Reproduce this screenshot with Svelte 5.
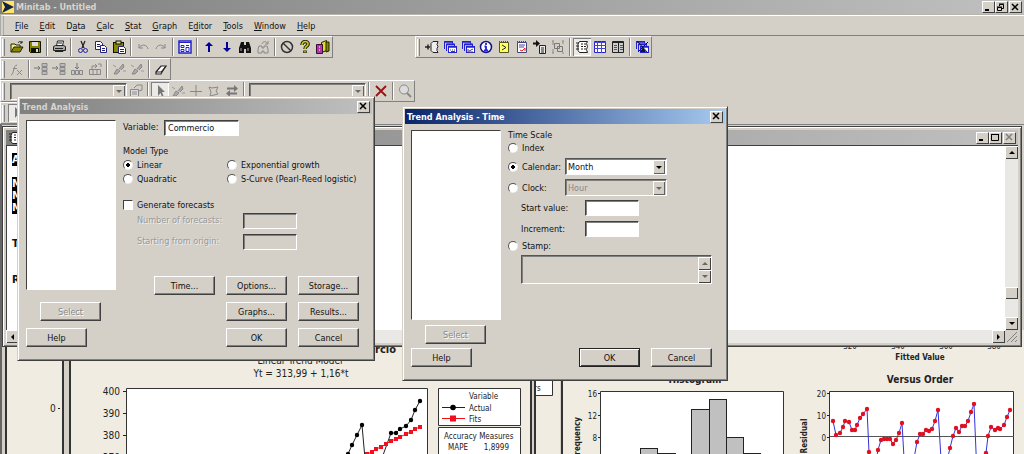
<script>
  const menus = [
    ["", "F", "ile"],
    ["", "E", "dit"],
    ["D", "a", "ta"],
    ["", "C", "alc"],
    ["", "S", "tat"],
    ["", "G", "raph"],
    ["E", "d", "itor"],
    ["", "T", "ools"],
    ["", "W", "indow"],
    ["", "H", "elp"]
  ];

  // 14x14 glyphs
  const windows = (mark) =>
    `<path d="M1.500 9V1.500h8v2M3.500 11V4h8v2" fill="none" stroke="#22c"/><path d="M1 2h9M3 4.500h9" stroke="#22c" stroke-width="1.500"/><rect x="5.500" y="6.500" width="8" height="6" fill="#fff" stroke="#22c"/><path d="M5 7h9" stroke="#22c" stroke-width="1.500"/>${mark}`;
  const sheet =
    '<path d="M4.500 1.500h8l-1 2 1 3-1 3 1 3h-8l-1.500-2V4z" fill="#fff" stroke="#222"/>';

  const icons = {
    open: '<path d="M1 12V4h4l1 1h4v2" fill="#ee8" stroke="#220"/><path d="M1 12l3-5h9l-3 5z" fill="#880" stroke="#220"/><path d="M8 3c1-2 3-2 4 0m0-2v2h-2" fill="none" stroke="#220"/>',
    save: '<path d="M1.500 1.500h11v11h-10l-1-1z" fill="#880" stroke="#110"/><path d="M4 2h6v4H4z" fill="#ddd"/><path d="M3 8h8v5H3z" fill="#110"/><path d="M8 9h2v3H8z" fill="#ddd"/>',
    print: '<path d="M4.500 6l1-5h6l-1 5" fill="#fff" stroke="#222"/><path d="M1.500 6.500l2-1h8l2 1v4h-12z" fill="#aaa" stroke="#222"/><path d="M3 11.500h8l2-2M3 8.500h8M6 3h4" fill="none" stroke="#222"/>',
    cut: '<path d="M5 1l3 7M9 1L6 8" stroke="#222" stroke-width="1.300"/><circle cx="4.500" cy="10.500" r="2" fill="none" stroke="#22a"/><circle cx="9.500" cy="10.500" r="2" fill="none" stroke="#22a"/>',
    copy: '<path d="M1.500 1.500h5l2 2v6h-7z" fill="#fff" stroke="#227"/><path d="M3 4.500h3M3 6.500h3" stroke="#227"/><path d="M6.500 5.500h4l2 2v5h-6z" fill="#fff" stroke="#227"/><path d="M8 8.500h3M8 10.500h3" stroke="#227"/>',
    paste: '<rect x="1.500" y="2.500" width="10" height="10" fill="#880" stroke="#110"/><rect x="4" y="1" width="5" height="3" fill="#dd8" stroke="#110"/><path d="M6.500 6.500h5l2 2v5h-7z" fill="#fff" stroke="#227"/><path d="M8 9.500h4M8 11.500h4" stroke="#227"/>',
    undo: '<path d="M3 4v4h4M3 8c2-4 8-4 9 1" fill="none" stroke="#888"/>',
    redo: '<path d="M11 4v4H7M11 8c-2-4-8-4-9 1" fill="none" stroke="#888"/>',
    dialog: '<rect x="1" y="1" width="12" height="12" fill="#fff" stroke="#22c" stroke-width="1.500"/><path d="M1 2.500h12" stroke="#22c"/><path d="M3 5.500h3v2H3zM3 9.500h3v2H3zM8 5.500h3M8 7.500h3v4H8z" fill="none" stroke="#22c"/>',
    up: '<path d="M7 2l4 4H8v6H6V6H3z" fill="#009"/>',
    down: '<path d="M7 12l4-4H8V2H6v6H3z" fill="#009"/>',
    find: '<path d="M3 2h3v3h2V2h3l2 6v5H8V9H6v4H1V8z" fill="#111"/><path d="M3 8v3M10 8v3" stroke="#aaa"/>',
    findNext: '<path d="M3 6h3v2h2V6h3l1 3v4H8v-2H6v2H2V9z" fill="none" stroke="#888"/><path d="M6 4c1-3 4-3 5-1m1-2v3H9" fill="none" stroke="#888"/>',
    stop: '<circle cx="7" cy="7" r="5.500" fill="none" stroke="#333" stroke-width="1.500"/><path d="M3 3l8 8" stroke="#333" stroke-width="1.500"/>',
    help: '<path d="M4 5c0-5 7-4 6-.5C9.500 6.500 7 6 7 9M7 10.500V13" fill="none" stroke="#220" stroke-width="3.500"/><path d="M4 5c0-5 7-4 6-.5C9.500 6.500 7 6 7 9M7 11V12.500" fill="none" stroke="#cc2" stroke-width="1.500"/>',
    books: '<path d="M5.500 2.500l5-2v10l-5 2z" fill="#dd2" stroke="#220"/><path d="M10 2h3v9l-3 1z" fill="#880" stroke="#220"/><path d="M.5 4.500h6v9h-6z" fill="#b3a" stroke="#313"/><path d="M3 7h1M3 10h1" stroke="#fff"/>',
    fx: '<path d="M1 13c3 0 2-10 6-10M3 6.500h4M7 8l5 5M12 8l-5 5" fill="none" stroke="#888"/>',
    rows: '<path d="M0 6h6M4 4l2 2-2 2" fill="none" stroke="#777"/><path d="M8 1.500h5v3H8zM8 5.500h5v3H8zM8 9.500h5v3H8z" fill="#bbb" stroke="#888"/>',
    insert: '<path d="M1.500 8.500h3v4h-3zM5.500 8.500h3v4h-3zM9.500 8.500h3v4h-3z" fill="#ccc" stroke="#888"/><path d="M7 1v6M5 5l2 2 2-2" fill="none" stroke="#777"/>',
    move: '<path d="M1.500 7.500h11v5h-11zM5 7v6M9 7v6M4 7V4h5m-2-2l2 2-2 2M10 2h3v3" fill="none" stroke="#888"/>',
    brush: '<path d="M2 12l3-5 3 2-3 3zM7 7l4-5 1 3-3 3" fill="#aaa" stroke="#888"/><path d="M1 3l3 2M11 9h3" stroke="#999"/>',
    eraser: '<path d="M2 10l5-6h5l-4 6-1 2H2z" fill="#fff" stroke="#222" stroke-width="1.200"/><path d="M2 10h5l5-6" fill="none" stroke="#222"/>',
    props: '<path d="M1.500 5.500h8v7h-8z" fill="#ddd" stroke="#888"/><path d="M3 8h5M3 10h5M5 4l3-3h5v5l-3 1" fill="none" stroke="#888"/>',
    arrow: '<path d="M5 1v11l2.500-3L9 13l1.500-1L9 8h3z" fill="#777"/>',
    plus: '<path d="M7 1v12M1 7.500h12" stroke="#888"/>',
    poly: '<path d="M2 3l3 1 6-1-2 4 2 3-8 2 1-4z" fill="none" stroke="#888"/>',
    swap: '<path d="M2 4.500h8M12 9.500H4" stroke="#777" stroke-width="2"/><path d="M9 1l4 3.500L9 8zM5 6L1 9.500 5 13z" fill="#777"/>',
    cross: '<path d="M2 2l10 10M12 2L2 12" stroke="#911" stroke-width="1.800"/>',
    zoom: '<circle cx="6" cy="5.500" r="4.500" fill="#ddd" stroke="#888"/><path d="M9 9l4 4" stroke="#888" stroke-width="2"/>',
    toSheet: `<path d="M13 1.500H8l-2 2v7l2 2h5l-1-2v-2l1-2-1-2z" fill="#eee" stroke="#222"/><path d="M0 7h5M3 4.500v5" stroke="#222" stroke-width="1.500"/>`,
    sessions: windows('<path d="M7 10h1M9 10h1M11 10h1M8 11.500h4" stroke="#447"/>'),
    graphs: windows('<path d="M7 9v3h5M8 11l2-1 2-1" fill="none" stroke="#447"/>'),
    info: '<circle cx="7" cy="7" r="5.500" fill="#fff" stroke="#118" stroke-width="1.500"/><path d="M7 3v2M7 6v5M5.500 6.500H7M5 10.500h4" stroke="#22d" stroke-width="1.800"/>',
    history: '<path d="M2.500 2.500h9v10h-9z" fill="#ff6" stroke="#552"/><path d="M2 1.500h10" stroke="#552" stroke-dasharray="1 1"/><path d="M5 5l4 2.500L5 10" fill="none" stroke="#222"/>',
    report: '<path d="M2.500 2.500h9v10h-9z" fill="#fff" stroke="#447"/><path d="M2 1.500h10" stroke="#447" stroke-dasharray="1 1"/><path d="M4 5h6M4 7h5" stroke="#44a"/><path d="M5 10l2 1 3-3v3" fill="none" stroke="#d22"/>',
    append: '<path d="M0 3.500h4" stroke="#111" stroke-width="2"/><path d="M3 0l4 3.500L3 7z" fill="#111"/><path d="M6.500 5.500h6v8h-6z" fill="#eee" stroke="#222"/><path d="M8 8h3M8 10h3M8 12h3" stroke="#222"/>',
    group: '<path d="M3.500 3.500h5v5h-5zM6.500 6.500h5v5h-5z" fill="none" stroke="#777"/><path d="M1 1h2M11 1h2M1 13h2M11 13h2M2 1v4M12 1v3M2 9v4" stroke="#888"/>',
    session: sheet + '<path d="M6 4h2M9 4h2M6 6.500h2M9 6.500h2M6 9h2M9 9h2M1 3h3M1 6h3M1 9h3" stroke="#222"/>',
    grid: '<path d="M1.500 1.500h11v11h-11z" fill="#fff" stroke="#22c"/><path d="M1 2.500h12M1 5.500h12M1 8.500h12M4.500 1v12M8.500 1v12" stroke="#44d"/>',
    columns: '<path d="M1.500 1.500h11v11h-11z" fill="#ccc" stroke="#222"/><path d="M2 2.500h10M7.500 1v12" stroke="#222"/><path d="M3 5.500h3M3 7.500h3M3 9.500h3M9 5.500h3M9 7.500h3M9 9.500h3" stroke="#555"/>',
    closeAll: windows("") + '<path d="M2 1l11 12M13 2L3 12" stroke="#113"/><path d="M5 12l3-5 3 5z" fill="#113"/>'
  };

  const standardBar = ["open", "save", "|", "print", "|", "cut", "copy", "paste", "|", "undo", "redo", "|", "dialog", "|", "up", "down", "find", "findNext", "|", "stop", "help", "books"];
  const projectBar = ["toSheet", "sessions", "graphs", "info", "history", "report", "append", "group", "|", "session", "grid", "columns", "|", "closeAll"];
  const worksheetBar = ["fx", "|", "rows", "rows", "insert", "move", "|", "brush", "brush", "|", "eraser"];
  const graphBar = ["arrow", "brush", "plus", "poly", "swap"];

  const actual = [[343, 460], [348, 454], [352, 445], [357, 435], [362, 425], [366, 470], [382, 458], [391, 433], [396, 433], [400, 429], [406, 426], [411, 420], [415, 410], [420, 401]];
  const fits = [[367, 454], [372, 452], [376, 449], [381, 447], [386, 444], [391, 441], [396, 439], [400, 437], [406, 434], [411, 432], [415, 429], [420, 427]];
  const bars = [[640, 448, 17], [657, 453, 18], [691, 409, 18], [709, 399, 17], [726, 437, 17], [743, 453, 17]];
  const residuals = [
    [833, 421], [836, 435], [840, 433], [843, 427], [845, 421], [849, 422], [852, 430], [855, 430], [857, 425], [860, 418], [863, 414], [867, 409],
    [869, 452], [873, 475], [878, 450], [881, 440], [884, 439], [887, 439], [890, 439], [893, 444], [896, 440], [899, 433], [902, 423],
    [905, 475], [911, 475], [917, 442], [920, 434], [923, 434], [926, 430], [929, 431], [932, 429], [935, 421], [938, 410],
    [942, 475], [946, 465], [950, 448], [953, 436], [956, 428], [959, 432], [962, 426], [965, 426], [968, 421], [971, 412], [974, 404],
    [977, 475], [982, 475], [986, 453], [988, 436], [991, 427], [995, 430], [998, 428], [1000, 429], [1004, 425], [1007, 417], [1010, 410]
  ];

  let model = $state("linear");
  let scale = $state("calendar");
  let variable = $state("Commercio");
</script>

{#snippet icon(name)}
  <svg class="icon" viewBox="0 0 14 14">{@html icons[name]}</svg>
{/snippet}

{#snippet tools(names)}
  {#each names as name}
    {#if name === "|"}
      <span class="sep"></span>
    {:else}
      <button class="tool" class:pressed={name === "arrow" || name === "session"} aria-label={name}>{@render icon(name)}</button>
    {/if}
  {/each}
{/snippet}

{#snippet caption(kind, disabled = false)}
  <button class="caption" {disabled} aria-label={kind}>
    <svg viewBox="0 0 10 9">
      {#if kind === "close"}
        <path d="M2 1l6 6M8 1L2 7" stroke-width="1.5" />
      {:else if kind === "minimize"}
        <path d="M2 7h4" stroke-width="2" />
      {:else if kind === "maximize"}
        <path d="M1.500 1v6.500h7V1M1 1.500h8" />
      {:else}
        <path d="M3.500 3V1.500h4v4H6M3 1h5M1.500 4.500h4v3h-4zM1 4h5" />
      {/if}
    </svg>
  </button>
{/snippet}

{#snippet arrow(dir, disabled = false)}
  <button class="arrow {dir}" {disabled} aria-label={dir}><i></i></button>
{/snippet}

<main>
  <header class="title main-title">
    <svg class="logo" viewBox="0 0 12 12">
      <path d="M0 0h12v12H0z" fill="#ffe566" />
      <path d="M0 0l12 6-12 6 3-6z" fill="#124" />
    </svg>
    <span>Minitab - Untitled</span>
    {@render caption("minimize")}{@render caption("restore")}{@render caption("close")}
  </header>

  <nav class="menu">
    {#each menus as [before, key, after]}
      <button>{before}<u>{key}</u>{after}</button>
    {/each}
  </nav>

  <div class="bars">
    <div class="row">
      <div class="toolbar">{@render tools(standardBar)}</div>
      <div class="toolbar project">{@render tools(projectBar)}</div>
    </div>
    <div class="row">
      <div class="toolbar">{@render tools(worksheetBar)}</div>
    </div>
    <div class="row">
      <div class="toolbar">
        <div class="combo wide off">
          <select disabled aria-label="Item"><option></option></select>
          <span class="drop"></span>
        </div>
        {@render tools(["props", "|", ...graphBar, "|"])}
        <div class="combo wide off">
          <select disabled aria-label="Group"><option></option></select>
          <span class="drop"></span>
        </div>
        {@render tools(["|", "cross", "|", "zoom"])}
      </div>
    </div>
    <div class="row">
      <div class="toolbar">{@render tools(graphBar)}</div>
    </div>
  </div>

  <section class="workspace">
    <div class="graph summary">
      <svg viewBox="7 330 55 200">
        <text x="50" y="412">0</text>
        <path class="axis" d="M58 408.500h2" />
      </svg>
    </div>

    <div class="graph legend">
      <svg viewBox="536 330 24 200">
        <path class="plot" d="M530.500 370.500h22v25h-22z" />
        <text class="small" x="534" y="391">rs</text>
      </svg>
    </div>

    <div class="graph trend">
      <svg viewBox="71 330 459 200">
        <text class="head" x="300" y="353" text-anchor="middle">Trend Analysis Plot for Commercio</text>
        <text class="sub" x="300" y="364" text-anchor="middle">Linear Trend Model</text>
        <text class="sub" x="301" y="377" text-anchor="middle">Yt = 313,99 + 1,16*t</text>
        <path class="plot" d="M126.500 388.500h301v141h-301z" />
        {#each [400, 390, 380, 370] as tick, i}
          <text x="120" y={395 + i * 22} text-anchor="end">{tick}</text>
          <path class="axis" d="M123 {391.5 + i * 22}h3" />
        {/each}
        <polyline points={actual.join(" ")} fill="none" stroke="#222" />
        {#each actual as [x, y]}
          <circle cx={x} cy={y} r="2.2" />
        {/each}
        <polyline points={fits.join(" ")} fill="none" stroke="#e11" />
        {#each fits as [x, y]}
          <rect x={x - 2} y={y - 2} width="4" height="4" fill="#f01020" />
        {/each}
        <path class="plot" d="M438.500 388.500h82v37h-82zM438.500 427.500h82v90h-82z" />
        <text class="small" x="469" y="399">Variable</text>
        <path class="axis" d="M442 407.500h23" />
        <circle cx="453" cy="407.500" r="2.800" />
        <text class="small" x="469" y="411">Actual</text>
        <path d="M442 418.500h23" stroke="#e11" />
        <path d="M450 415.500h6v6h-6z" fill="#f01020" />
        <text class="small" x="469" y="422">Fits</text>
        <text class="small" x="444" y="439">Accuracy Measures</text>
        <text class="small" x="448" y="450">MAPE</text>
        <text class="small" x="509" y="450" text-anchor="end">1,8999</text>
      </svg>
    </div>

    <div class="graph residual">
      <svg viewBox="563 330 461 200">
        <text class="label" x="695" y="383" text-anchor="middle">Histogram</text>
        <path class="plot" d="M600.500 391.500h183v130h-183z" />
        {#each [16, 12, 8] as tick, i}
          <text class="small" x="597" y={397 + i * 22} text-anchor="end">{tick}</text>
          <path class="axis" d="M598 {393.5 + i * 22}h2" />
        {/each}
        {#each bars as [x, y, w]}
          <rect x={x + 0.5} y={y + 0.5} width={w} height="90" fill="#c0c0c0" stroke="#222" />
        {/each}
        <text class="small bold" transform="translate(580 438) rotate(-90)" text-anchor="middle">Frequency</text>

        {#each [320, 340, 360, 380] as tick, i}
          <text class="small" x={850 + i * 48} y="349" text-anchor="middle">{tick}</text>
        {/each}
        <text class="small bold" x="920" y="360" text-anchor="middle">Fitted Value</text>
        <text class="label" x="920" y="383" text-anchor="middle">Versus Order</text>
        <path class="plot" d="M829.500 391.500h184v130h-184z" />
        {#each [20, 10, 0] as tick, i}
          <text class="small" x="826" y={397 + i * 22} text-anchor="end">{tick}</text>
          <path class="axis" d="M827 {393.5 + i * 22}h3" />
        {/each}
        <path d="M830 436.500h184" stroke="#555" />
        <polyline points={residuals.join(" ")} fill="none" stroke="#33d" />
        {#each residuals as [x, y]}
          <circle cx={x} cy={y} r="2.200" fill="#e01020" />
        {/each}
        <text class="small bold" transform="translate(807 436) rotate(-90)" text-anchor="middle">Residual</text>
      </svg>
    </div>

    <div class="session">
      <div class="title gray">
        {@render icon("session")}
        <span></span>
        {@render caption("minimize")}{@render caption("maximize")}{@render caption("close", true)}
      </div>
      <div class="output">
        <div class="lines">
          <p><mark>A</mark></p>
          <p></p>
          <p><mark>M</mark></p>
          <p><mark>M</mark></p>
          <p><mark>M</mark></p>
          <p class="block">T</p>
          <p class="block">R</p>
        </div>
        <div class="scroll">{@render arrow("up")}<span class="thumb"></span>{@render arrow("down")}</div>
      </div>
      <div class="hscroll">
        {@render arrow("left")}<span class="track"></span>{@render arrow("right")}
        <svg class="size" viewBox="0 0 13 13"><path d="M2 12L12 2M6 12l6-6M10 12l2-2" stroke="#808080" /></svg>
      </div>
    </div>
  </section>

  <form class="dialog trend-dialog" onsubmit={(e) => e.preventDefault()}>
    <div class="title gray"><span>Trend Analysis</span>{@render caption("close")}</div>
    <div class="body">
      <div class="side">
        <div class="list"></div>
        <button class="btn select" disabled>Select</button>
        <button class="btn">Help</button>
      </div>
      <div class="content">
        <div class="field">
          <label for="variable">Variable:</label>
          <input id="variable" class="text variable" bind:value={variable} />
        </div>
        <fieldset class="models">
          <legend>Model Type</legend>
          <label><input type="radio" bind:group={model} value="linear" />Linear</label>
          <label><input type="radio" bind:group={model} value="exponential" />Exponential growth</label>
          <label><input type="radio" bind:group={model} value="quadratic" />Quadratic</label>
          <label><input type="radio" bind:group={model} value="s-curve" />S-Curve (Pearl-Reed logistic)</label>
        </fieldset>
        <label class="check"><input type="checkbox" />Generate forecasts</label>
        <div class="forecasts">
          <label for="count">Number of forecasts:</label>
          <input id="count" class="text" disabled />
          <label for="origin">Starting from origin:</label>
          <input id="origin" class="text" disabled />
        </div>
        <div class="buttons">
          <button class="btn">Time...</button>
          <button class="btn">Options...</button>
          <button class="btn">Storage...</button>
          <button class="btn second">Graphs...</button>
          <button class="btn">Results...</button>
          <button class="btn second">OK</button>
          <button class="btn">Cancel</button>
        </div>
      </div>
    </div>
  </form>

  <form class="dialog time-dialog" onsubmit={(e) => e.preventDefault()}>
    <div class="title blue"><span>Trend Analysis - Time</span>{@render caption("close")}</div>
    <div class="body">
      <div class="side">
        <div class="list tall"></div>
        <button class="btn select" disabled>Select</button>
        <button class="btn">Help</button>
      </div>
      <div class="content">
        <fieldset class="scale">
          <legend>Time Scale</legend>
          <label><input type="radio" bind:group={scale} value="index" />Index</label>
          <div class="choice">
            <label><input type="radio" bind:group={scale} value="calendar" />Calendar:</label>
            <div class="combo">
              <select aria-label="Calendar unit"><option>Month</option></select>
              <span class="drop"></span>
            </div>
          </div>
          <div class="choice">
            <label><input type="radio" bind:group={scale} value="clock" />Clock:</label>
            <div class="combo off">
              <select disabled aria-label="Clock unit"><option>Hour</option></select>
              <span class="drop"></span>
            </div>
          </div>
          <div class="values">
            <label for="start">Start value:</label>
            <input id="start" class="text" />
            <label for="increment">Increment:</label>
            <input id="increment" class="text" />
          </div>
          <label><input type="radio" bind:group={scale} value="stamp" />Stamp:</label>
          <div class="stamp">
            <textarea disabled aria-label="Stamp columns"></textarea>
            <div class="spin">{@render arrow("up", true)}{@render arrow("down", true)}</div>
          </div>
        </fieldset>
        <div class="actions">
          <button class="btn default">OK</button>
          <button class="btn">Cancel</button>
        </div>
      </div>
    </div>
  </form>
</main>

<style>
  :global(body) {
    margin: 0;
    background: #d4d0c8;
  }

  main {
    position: relative;
    display: flex;
    flex-direction: column;
    height: 100vh;
    overflow: hidden;
    background: #d4d0c8;
    color: #111;
    font: 9px/14px "DejaVu Sans Condensed", "DejaVu Sans", sans-serif;
  }

  button,
  input,
  select,
  textarea {
    box-sizing: border-box;
    margin: 0;
    padding: 0;
    border: 0;
    border-radius: 0;
    background: none;
    color: inherit;
    font: inherit;
    appearance: none;
    outline: none;
  }

  /* title bars */
  .title {
    display: flex;
    align-items: center;
    height: 15px;
    padding: 0 2px;
    color: #d8d5ce;
    font-weight: bold;
    background: linear-gradient(90deg, #808080, #c0c0c0);
  }

  .title span {
    flex: 1;
    white-space: nowrap;
  }

  .blue {
    color: #fff;
    background: linear-gradient(90deg, #0a246a, #a6caf0);
  }

  .main-title {
    height: 14px;
    border-bottom: 1px solid #b8b5ae;
  }

  .logo {
    width: 12px;
    height: 12px;
    margin-right: 2px;
  }

  .caption {
    width: 13px;
    height: 12px;
    background: #d4d0c8;
    border: 1px solid;
    border-color: #fff #404040 #404040 #fff;
  }

  .caption:last-child {
    margin-left: 1px;
  }

  .caption svg {
    display: block;
    width: 10px;
    height: 9px;
    fill: none;
    stroke: #000;
  }

  .caption:disabled svg {
    stroke: #808080;
  }

  /* menu and toolbars */
  .menu {
    display: flex;
    gap: 11px;
    height: 19px;
    padding-left: 11px;
    border-top: 1px solid #fff;
    border-bottom: 1px solid #808080;
    border-left: 4px double #aaa;
  }

  .row {
    display: flex;
    gap: 82px;
    height: 22px;
  }

  .toolbar {
    display: flex;
    align-items: center;
    box-sizing: border-box;
    height: 22px;
    padding-left: 1px;
    border: 1px solid;
    border-color: #fff #808080 #808080 #fff;
  }

  .toolbar::before {
    content: "";
    width: 1px;
    height: 17px;
    margin-right: 3px;
    border-left: 1px solid #fff;
    border-right: 1px solid #808080;
  }

  .tool {
    width: 18px;
    height: 18px;
    padding: 2px;
  }

  .pressed {
    background: #eceae6;
    box-shadow: inset 1px 1px #808080, inset -1px -1px #fff;
  }

  .icon {
    display: block;
    flex: none;
    width: 14px;
    height: 14px;
  }

  .sep {
    box-sizing: border-box;
    width: 2px;
    height: 18px;
    margin: 0 2px;
    border-left: 1px solid #808080;
    border-right: 1px solid #fff;
  }

  /* child windows */
  .workspace {
    position: relative;
    flex: 1;
    overflow: hidden;
    background: #d4d0c8;
    border-left: 2px solid #666;
    border-top: 1px solid #808080;
  }

  .session {
    position: absolute;
    top: 1px;
    left: 0;
    right: 2px;
    display: flex;
    flex-direction: column;
    box-sizing: border-box;
    height: 221px;
    padding: 3px;
    border: 1px solid #404040;
    background: #d4d0c8;
    box-shadow: inset 1px 1px #fff, inset -1px -1px #808080;
  }

  .session .caption {
    flex: none;
  }

  .output {
    display: flex;
    flex: 1;
    min-height: 0;
    border-top: 1px solid #404040;
    border-left: 1px solid #404040;
    background: #fff;
  }

  .lines {
    flex: 1;
    padding: 8px 5px;
    font-size: 11px;
    font-weight: bold;
    line-height: 12px;
  }

  .lines p {
    height: 12px;
    margin: 0;
  }

  .lines .block {
    padding-top: 24px;
  }

  mark {
    color: #fff;
    background: #000;
  }

  .scroll {
    display: flex;
    flex-direction: column;
    width: 13px;
    background: #eae8e4;
  }

  .thumb {
    height: 12px;
    margin-top: auto;
    margin-bottom: 18px;
    background: #d4d0c8;
    box-shadow: inset 1px 1px #fff, inset -1px -1px #404040;
  }

  .hscroll {
    display: flex;
    height: 13px;
    background: #eae8e4;
  }

  .track {
    flex: 1;
  }

  .size {
    width: 13px;
    background: #d4d0c8;
  }

  .arrow {
    display: grid;
    place-items: center;
    width: 13px;
    height: 13px;
    background: #d4d0c8;
    box-shadow: inset 1px 1px #fff, inset -1px -1px #404040;
  }

  .arrow i,
  .drop::after {
    content: "";
    border: 3px solid transparent;
  }

  .arrow.up i {
    border-top: 0;
    border-bottom-color: #000;
  }

  .arrow.down i,
  .drop::after {
    border-bottom: 0;
    border-top-color: #000;
  }

  .arrow.left i {
    border-left: 0;
    border-right-color: #000;
  }

  .arrow.right i {
    border-right: 0;
    border-left-color: #000;
  }

  .arrow:disabled i,
  .off .drop::after {
    opacity: 0.5;
  }

  /* graphs */
  .graph {
    position: absolute;
    top: 205px;
    height: 200px;
    background: #f0ece1;
    border: 0 solid #333;
    border-left-width: 2px;
  }

  .graph svg {
    display: block;
    height: 200px;
  }

  .summary {
    left: 3px;
    width: 55px;
    border-right-width: 2px;
  }

  .trend {
    left: 67px;
    width: 459px;
    border-right-width: 2px;
  }

  .legend {
    left: 532px;
    width: 24px;
  }

  .residual {
    left: 559px;
    right: 0;
  }

  .graph text {
    font-size: 10px;
    fill: #222;
  }

  .graph .small {
    font-size: 8px;
  }

  .graph .label {
    font-size: 10px;
    font-weight: bold;
  }

  .graph .head {
    font-size: 11px;
    font-weight: bold;
  }

  .graph .bold {
    font-weight: bold;
  }

  .plot {
    fill: #fff;
    stroke: #333;
  }

  .axis {
    stroke: #222;
  }

  /* dialogs */
  .dialog {
    position: absolute;
    box-sizing: border-box;
    padding: 2px;
    background: #d4d0c8;
    border: 1px solid;
    border-color: #d4d0c8 #404040 #404040 #d4d0c8;
    box-shadow: inset 1px 1px #fff, inset -1px -1px #808080;
  }

  .trend-dialog {
    top: 96px;
    left: 17px;
    width: 358px;
  }

  .time-dialog {
    top: 106px;
    left: 402px;
    width: 326px;
  }

  .body {
    display: flex;
    gap: 7px;
    padding: 6px 13px 11px 6px;
  }

  .side {
    display: flex;
    flex-direction: column;
    gap: 7px;
    width: 90px;
  }

  .list {
    height: 170px;
    margin-bottom: 5px;
    box-sizing: border-box;
    background: #fff;
    border: 1px solid;
    border-color: #404040 #fff #fff #404040;
  }

  .time-dialog .side {
    gap: 4px;
  }

  .time-dialog .list {
    height: 190px;
    margin-bottom: 1px;
  }

  .content {
    display: flex;
    flex: 1;
    flex-direction: column;
    min-width: 0;
  }

  .btn {
    width: 61px;
    height: 19px;
    background: #d4d0c8;
    border: 1px solid;
    border-color: #fff #404040 #404040 #fff;
    box-shadow: inset -1px -1px #808080;
  }

  .btn.select {
    margin-left: 14px;
  }

  .btn:disabled {
    color: #888;
    text-shadow: 1px 1px #fff;
  }

  .btn.default {
    border-color: #222;
    box-shadow: inset 1px 1px #fff, inset -1px -1px #404040;
  }

  .text {
    width: 54px;
    height: 16px;
    padding: 1px 3px;
    background: #fff;
    border: 1px solid;
    border-color: #404040 #fff #fff #404040;
    box-shadow: inset 1px 1px #808080;
  }

  .text:disabled {
    background: none;
  }

  .variable {
    width: 75px;
  }

  .field {
    display: flex;
    gap: 5px;
  }

  .field label {
    width: 36px;
  }

  fieldset {
    min-width: 0;
    margin: 0;
    padding: 0;
    border: 0;
  }

  legend {
    padding: 0;
  }

  fieldset label,
  .check {
    display: flex;
    align-items: center;
    gap: 4px;
    white-space: nowrap;
  }

  .models {
    display: grid;
    grid-template-columns: 104px 1fr;
    margin-top: 9px;
  }

  .models legend {
    line-height: 13px;
  }

  input[type="radio"] {
    flex: none;
    width: 10px;
    height: 10px;
    border: 1px solid;
    border-color: #555 #eee #eee #555;
    border-radius: 50%;
    background: #fff;
  }

  input[type="radio"]:checked {
    background: radial-gradient(circle, #000 2px, #fff 2px);
  }

  input[type="checkbox"] {
    width: 10px;
    height: 10px;
    background: #fff;
    border: 1px solid;
    border-color: #404040 #fff #fff #404040;
  }

  .check {
    margin-top: 12px;
  }

  .forecasts {
    display: grid;
    grid-template-columns: 106px 1fr;
    row-gap: 5px;
    padding-left: 14px;
    margin-top: 1px;
    color: #999;
    text-shadow: 1px 1px #eee;
  }

  .buttons {
    display: grid;
    grid-template-columns: repeat(3, 61px);
    justify-content: end;
    gap: 7px 11px;
    margin-top: auto;
  }

  .second {
    grid-column: 2;
  }

  .scale legend {
    line-height: 11px;
  }

  .scale label {
    height: 13px;
  }

  .choice {
    display: grid;
    grid-template-columns: 57px 102px;
    align-items: center;
    margin-top: 4px;
  }

  .combo {
    position: relative;
    box-sizing: border-box;
    height: 17px;
    background: #fff;
    border: 1px solid;
    border-color: #555 #fff #fff #555;
    box-shadow: inset 1px 1px #808080;
  }

  .combo select {
    display: block;
    width: 100%;
    height: 15px;
    padding-left: 2px;
  }

  .combo.off {
    background: #d4d0c8;
    color: #888;
  }

  .combo.off select {
    opacity: 1;
  }

  .wide {
    width: 117px;
    margin-left: 2px;
  }

  .drop {
    position: absolute;
    top: 1px;
    right: 1px;
    bottom: 0;
    display: grid;
    place-items: center;
    width: 12px;
    background: #d4d0c8;
    box-shadow: inset 1px 1px #fff, inset -1px -1px #606060;
    pointer-events: none;
  }

  .values {
    display: grid;
    grid-template-columns: 64px 1fr;
    align-items: center;
    row-gap: 5px;
    padding-left: 13px;
    margin: 4px 0 2px;
  }

  .stamp {
    display: flex;
    box-sizing: border-box;
    height: 29px;
    margin: 3px 0 0 13px;
    border: 1px solid;
    border-color: #555 #fff #fff #555;
    box-shadow: inset 1px 1px #808080;
  }

  .stamp textarea {
    flex: 1;
    min-width: 0;
    resize: none;
  }

  .spin {
    padding-top: 1px;
  }

  .actions {
    display: flex;
    justify-content: end;
    gap: 11px;
    margin-top: auto;
  }
</style>
